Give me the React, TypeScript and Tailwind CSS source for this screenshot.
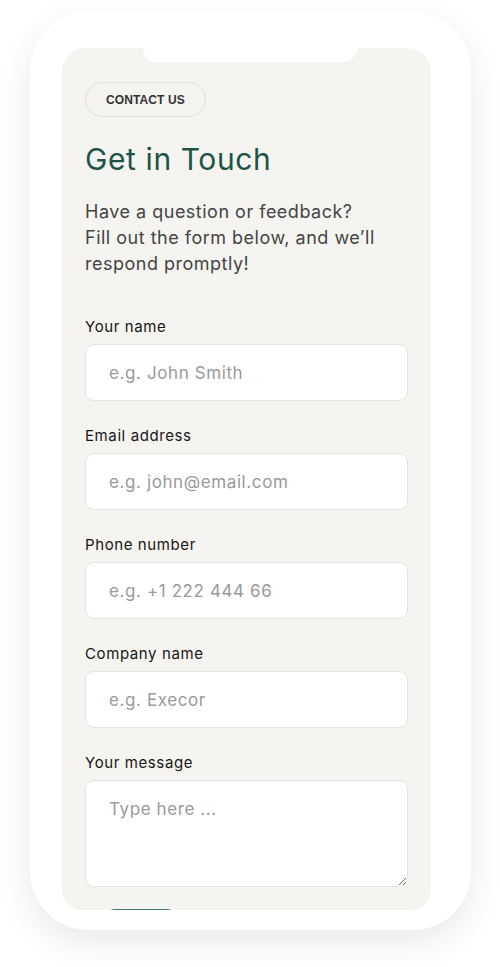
import React from "react";

const fields = [
  { label: "Your name", placeholder: "e.g. John Smith" },
  { label: "Email address", placeholder: "e.g. john@email.com" },
  { label: "Phone number", placeholder: "e.g. +1 222 444 66" },
  { label: "Company name", placeholder: "e.g. Execor" },
];

export default function App() {
  return (
    <div className="w-[500px] h-[967px] bg-white overflow-hidden">
      {/* phone frame */}
      <div className="ml-[30px] mt-[12px] w-[441px] h-[918px] rounded-[58px] bg-white shadow-[0_12px_34px_rgba(0,0,0,0.09)] pl-[32px] pt-[36px]">
        {/* screen */}
        <div
          className="relative w-[369px] h-[862px] bg-[#f5f4f1] rounded-t-[24px] rounded-b-[20px] overflow-hidden px-[23px] pt-[34px]"
          style={{ fontFamily: "Inter, 'Noto Sans', sans-serif" }}
        >
          {/* notch */}
          <div className="absolute left-[81px] top-0 w-[214px] h-[14px] bg-white rounded-b-[16px]" />

          <div
            className="inline-flex items-center h-[35px] px-[20px] rounded-full border border-[#e2dfda] text-[12px] font-semibold text-[#333] tracking-[0.1px]"
            style={{ fontFamily: "'Liberation Sans', Arial, sans-serif" }}
          >
            CONTACT US
          </div>

          <h1 className="mt-[24px] text-[30px] leading-[36px] text-[#1d5446] font-normal tracking-[0.6px]">
            Get in Touch
          </h1>

          <p className="mt-[22px] text-[18px] leading-[26px] text-[#444] tracking-[0.5px]">
            Have a question or feedback?
            <br />
            Fill out the form below, and we’ll
            <br />
            respond promptly!
          </p>

          <form className="mt-[40px] flex flex-col gap-[25px]">
            {fields.map((f) => (
              <div key={f.label} className="flex flex-col gap-[7px]">
                <label className="text-[15px] leading-[20px] text-[#161616] tracking-[0.6px]">{f.label}</label>
                <input
                  className="h-[57px] w-full rounded-[9px] border border-[#e6e4e0] bg-white px-[23px] text-[17px] tracking-[0.6px] text-[#333] placeholder:text-[#9a9a9a] outline-none"
                  placeholder={f.placeholder}
                />
              </div>
            ))}
            <div className="flex flex-col gap-[7px]">
              <label className="text-[15px] leading-[20px] text-[#161616] tracking-[0.6px]">Your message</label>
              <textarea
                className="h-[107px] w-full rounded-[9px] border border-[#e6e4e0] bg-white px-[23px] py-[16px] text-[17px] tracking-[0.6px] text-[#333] placeholder:text-[#9a9a9a] outline-none"
                placeholder="Type here ..."
              />
            </div>
          </form>

          <button
            type="button"
            aria-label="Send"
            className="mt-[22px] ml-[20px] h-[48px] w-[72px] rounded-[10px] bg-[#3d7a71]"
          />
        </div>
      </div>
    </div>
  );
}
